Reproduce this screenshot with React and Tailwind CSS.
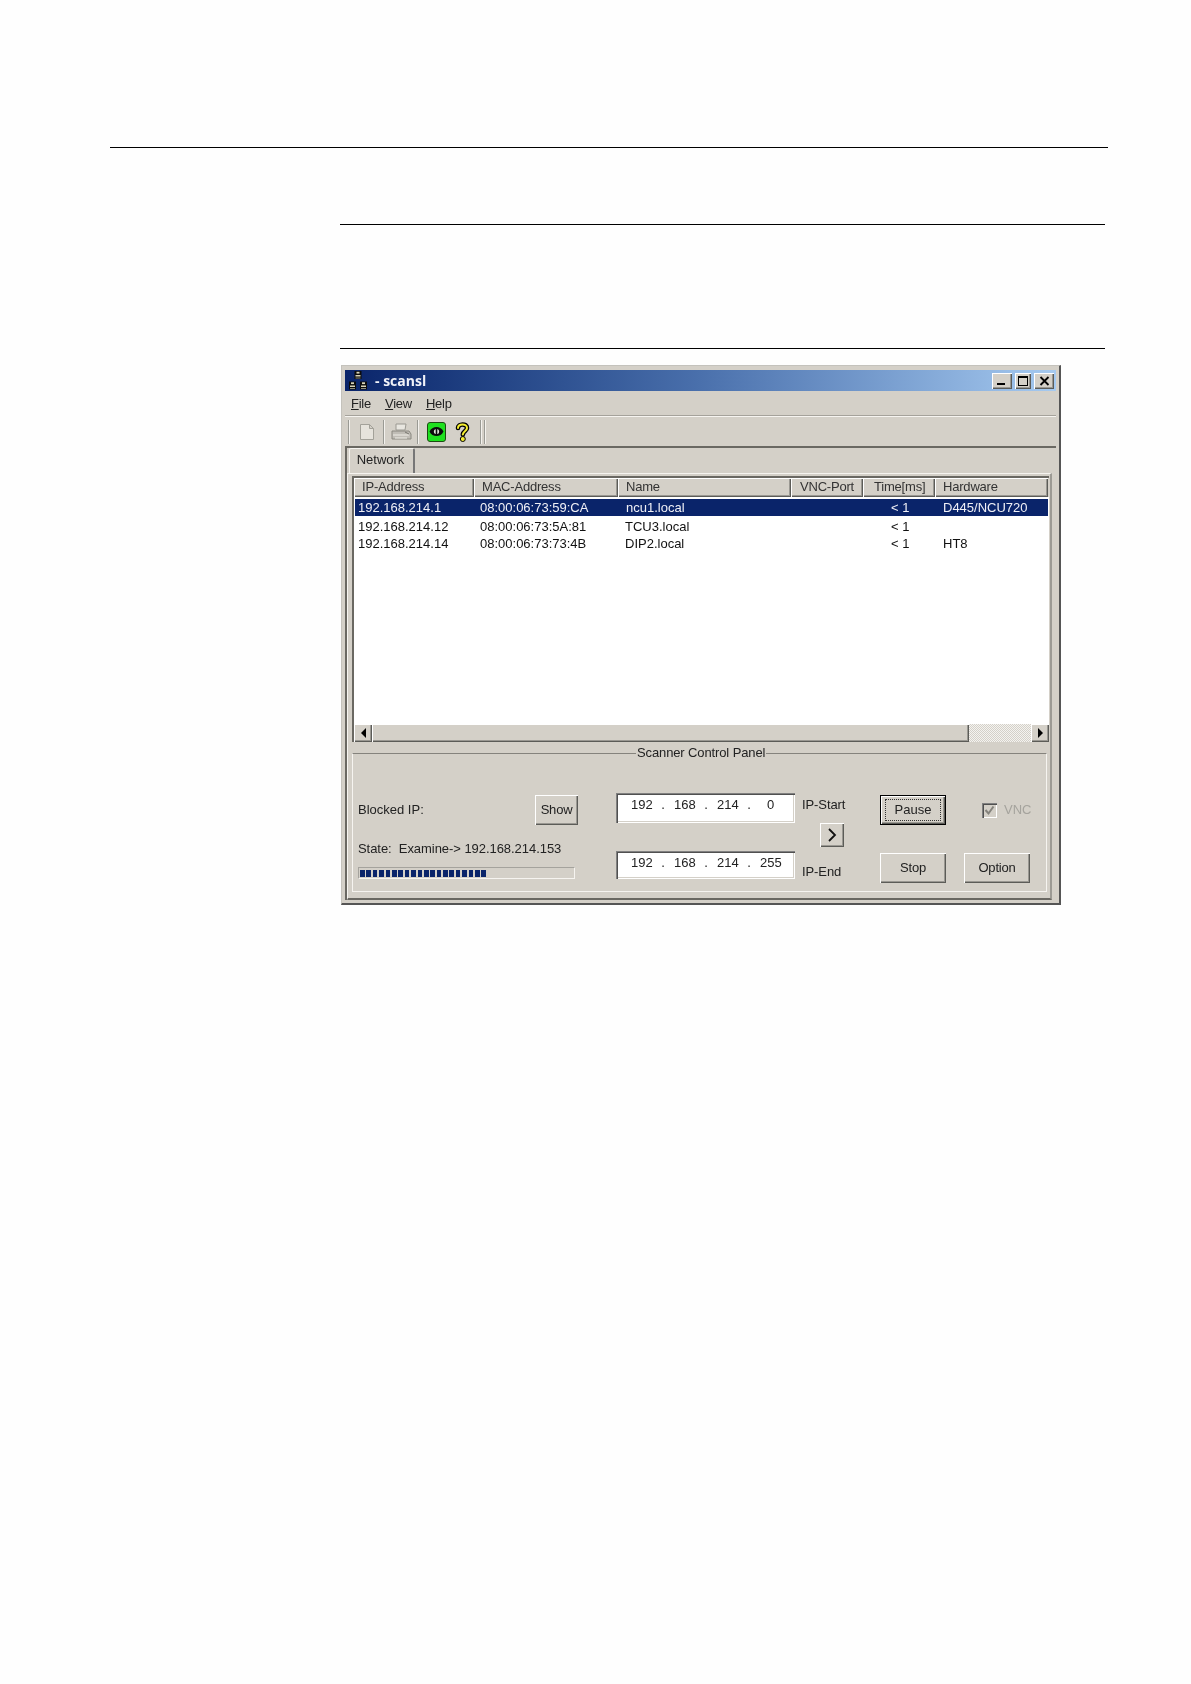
import React from "react";

const raised = "shadow-[inset_1px_1px_0_#ffffff,inset_-1px_-1px_0_#5c5c58,inset_-2px_-2px_0_#9a9892]";
const sunken = "shadow-[inset_1px_1px_0_#808080,inset_2px_2px_0_#505050,inset_-1px_-1px_0_#ffffff,inset_-2px_-2px_0_#d4d0c8]";

const columns = [
  { label: "IP-Address", w: "w-[120px]", pl: "pl-[8px]" },
  { label: "MAC-Address", w: "w-[144px]", pl: "pl-[8px]" },
  { label: "Name", w: "w-[173px]", pl: "pl-[8px]" },
  { label: "VNC-Port", w: "w-[72px]", pl: "pl-[9px]" },
  { label: "Time[ms]", w: "w-[72px]", pl: "pl-[11px]" },
  { label: "Hardware", w: "w-[113px]", pl: "pl-[8px]" },
];

const rows = [
  { ip: "192.168.214.1", mac: "08:00:06:73:59:CA", name: "ncu1.local", nameCls: "w-[266px] pl-[1px]", time: "< 1", hw: "D445/NCU720", cls: "bg-[#0a246a] text-[#f0f0f6] h-[17px] mt-[2px]" },
  { ip: "192.168.214.12", mac: "08:00:06:73:5A:81", name: "TCU3.local", nameCls: "w-[266px]", time: "< 1", hw: "", cls: "text-[#111] h-[17px] mt-[2px]" },
  { ip: "192.168.214.14", mac: "08:00:06:73:73:4B", name: "DIP2.local", nameCls: "w-[266px]", time: "< 1", hw: "HT8", cls: "text-[#111] h-[17px]" },
];

function Button({ children, className = "" }) {
  return (
    <div className={`flex items-center justify-center bg-[#d4d0c8] text-[13px] tracking-[-0.2px] text-[#222] ${raised} ${className}`}>{children}</div>
  );
}

function IpField({ values, className = "" }) {
  return (
    <div className={`flex w-[179px] bg-white text-[13px] leading-none text-[#222] ${sunken} ${className}`}>
      <div className="flex w-full items-start pl-[15px] pt-[5px]">
        {values.map((v, i) => (
          <React.Fragment key={i}>
            <span className="w-[21px] text-center">{v}</span>
            {i < 3 && <span className="w-[22px] text-center">.</span>}
          </React.Fragment>
        ))}
      </div>
    </div>
  );
}

function Separator({ className = "" }) {
  return <div className={`h-[24px] w-[2px] border-l border-[#9a9a94] bg-[#f4f2ee] ${className}`} />;
}

function WinIcon({ w, children }) {
  return (
    <div className={`flex h-[16px] items-center justify-center bg-[#d4d0c8] ${raised} ${w}`}>{children}</div>
  );
}

function NetBox({ x, y }) {
  return (
    <g transform={`translate(${x} ${y})`}>
      <rect x="0" y="0" width="7" height="8" fill="#0c0c0c" />
      <rect x="2" y="0.800" width="3" height="1.800" fill="#d8d4b8" />
      <rect x="1" y="4" width="5" height="1.500" fill="#d8d4b8" />
      <rect x="1" y="6.500" width="5" height="1" fill="#8c8a78" />
    </g>
  );
}

export default function App() {
  return (
    <div className="h-[1684px] w-[1191px] overflow-hidden bg-[#fefefe] font-['Liberation_Sans',sans-serif]">
      <div className="pt-[147px]">
        <div className="ml-[110px] h-[1px] w-[998px] bg-black" />
      </div>
      <div className="ml-[340px] mt-[76px] h-[1px] w-[765px] bg-black" />
      <div className="ml-[340px] mt-[123px] h-[1px] w-[765px] bg-black" />

      {/* Window */}
      <div className="ml-[341px] mt-[16px] flex h-[540px] w-[720px] flex-col border-b-[2px] border-l-[1px] border-r-[2px] border-t-[1px] border-b-[#555] border-l-[#c4c2bc] border-r-[#555] border-t-[#c4c2bc] bg-[#d4d0c8] p-[3px] pt-[4px] blur-[0.3px]">
        {/* Title bar */}
        <div className="flex h-[21px] shrink-0 items-center bg-gradient-to-r from-[#0a246a] via-[#4a70ac] to-[#a6caf0] pl-[3px] pr-[2px]">
          <svg width="20" height="21" viewBox="0 0 20 21" className="shrink-0">
            <NetBox x="6.500" y="1" />
            <NetBox x="1" y="11.500" />
            <NetBox x="12" y="11.500" />
          </svg>
          <span className="ml-[7px] font-['Open_Sans',sans-serif] text-[14px] font-bold leading-none text-[#f0f2f8]">- scansl</span>
          <div className="ml-auto flex gap-[3px]">
            <WinIcon w="w-[20px]"><div className="mr-[3px] mt-[7px] h-[2px] w-[8px] bg-black" /></WinIcon>
            <WinIcon w="w-[16px]"><div className="h-[10px] w-[10px] border border-t-[2px] border-black" /></WinIcon>
            <WinIcon w="w-[20px]">
              <svg width="11" height="10" viewBox="0 0 11 10"><path d="M1.500 1l8 8M9.500 1l-8 8" stroke="#000" strokeWidth="1.800" /></svg>
            </WinIcon>
          </div>
        </div>

        {/* Menu */}
        <div className="flex h-[25px] shrink-0 items-center gap-[14px] border-b border-[#a5a29b] pl-[6px] pt-[1px] text-[13px] tracking-[-0.25px] text-[#222]">
          <span><span className="underline">F</span>ile</span>
          <span><span className="underline">V</span>iew</span>
          <span><span className="underline">H</span>elp</span>
        </div>

        {/* Toolbar */}
        <div className="flex h-[30px] shrink-0 items-center border-t border-[#f6f4f0] pl-[3px]">
          <Separator />
          <svg width="17" height="18" viewBox="0 0 17 18" className="ml-[9px]">
            <path d="M1.500 1.500h9l4 4v11h-13z M10.500 1.500v4h4" fill="#e6e3dc" stroke="#a3a199" strokeWidth="1" />
          </svg>
          <Separator className="ml-[7px]" />
          <svg width="22" height="20" viewBox="0 0 22 20" className="ml-[5px]">
            <path d="M6 2h10l-1 6H6z" fill="#e8e6e0" stroke="#9b9992" />
            <path d="M2 9h17l2 3v5H2z" fill="#c0bdb6" stroke="#8a8880" />
            <path d="M3 13h16M5 16h12" stroke="#f0eee8" />
            <path d="M15 10l4 2" stroke="#77756e" />
          </svg>
          <Separator className="ml-[5px]" />
          <div className="ml-[8px] flex h-[20px] w-[19px] items-center justify-center rounded-[3px] border border-[#1c4a12] bg-[#1fe01f]">
            <svg width="15" height="13" viewBox="0 0 15 13">
              <path d="M0.500 6.500C3 0.500 12 0.500 14.500 6.500C12 12.500 3 12.500 0.500 6.500z" fill="#0c0c0c" />
              <circle cx="7.500" cy="6.500" r="2.600" fill="#dfe8dc" />
              <rect x="6.700" y="3.800" width="1.600" height="5.400" fill="#0c0c0c" />
            </svg>
          </div>
          <svg width="15" height="20" viewBox="0 0 15 20" className="ml-[9px]">
            <path d="M3 6C3 1.500 12 1 12 6C12 9 8.500 9 7.800 12.500" fill="none" stroke="#000" strokeWidth="4.600" strokeLinecap="round" />
            <path d="M3 6C3 1.500 12 1 12 6C12 9 8.500 9 7.800 12.500" fill="none" stroke="#f5ee30" strokeWidth="2" strokeLinecap="round" />
            <circle cx="7.800" cy="17" r="2.500" fill="#f5ee30" stroke="#000" />
          </svg>
          <Separator className="ml-[10px]" />
          <Separator className="ml-[2px]" />
        </div>

        {/* Client frame */}
        <div className="flex min-h-0 flex-1 flex-col border-l-[2px] border-t-[2px] border-[#6a6862] pr-[4px]">
          <div className="h-[25px] shrink-0 pl-[2px]">
            <div className="flex h-[26px] w-[66px] items-center justify-center rounded-t-[2px] border-l border-r-[2px] border-t border-l-[#f6f4f0] border-r-[#777] border-t-[#f6f4f0] bg-[#d4d0c8] pb-[4px] pr-[2px] text-[13px] text-[#222]">Network</div>
          </div>
          {/* Tab panel */}
          <div className="flex flex-1 flex-col border-b-[2px] border-l border-r-[2px] border-t border-b-[#6a6862] border-l-[#f6f4f0] border-r-[#9c9a94] border-t-[#f6f4f0] pb-[4px] pl-[4px] pr-[4px] pt-[2px]">
            {/* List */}
            <div className="flex h-[266px] w-[697px] flex-col border-l-[2px] border-t-[2px] border-[#6a6862] bg-white">
              <div className="flex h-[19px] shrink-0 bg-[#d4d0c8]">
                {columns.map((c) => (
                  <div key={c.label} className={`flex shrink-0 items-center pb-[1px] tracking-[-0.2px] ${c.w} ${c.pl} text-[13px] text-[#333] ${raised}`}>{c.label}</div>
                ))}
              </div>
              <div className="flex-1 pl-[1px] pr-[1px]">
                {rows.map((r) => (
                  <div key={r.ip} className={`flex items-center text-[13px] ${r.cls}`}>
                    <span className="w-[125px] pl-[3px]">{r.ip}</span>
                    <span className="w-[145px]">{r.mac}</span>
                    <span className={r.nameCls}>{r.name}</span>
                    <span className="w-[52px]">{r.time}</span>
                    <span>{r.hw}</span>
                  </div>
                ))}
              </div>
              {/* Scrollbar */}
              <div className="flex h-[18px] shrink-0 bg-[#d4d0c8]">
                <div className={`flex w-[18px] items-center justify-center ${raised}`}>
                  <div className="h-0 w-0 border-b-[5px] border-r-[5px] border-t-[5px] border-b-transparent border-r-black border-t-transparent" />
                </div>
                <div className={`w-[597px] ${raised}`} />
                <div className="flex-1 bg-[repeating-conic-gradient(#d4d0c8_0_25%,#f4f3f0_0_50%)] bg-[length:2px_2px]" />
                <div className={`flex w-[18px] items-center justify-center ${raised}`}>
                  <div className="h-0 w-0 border-b-[5px] border-l-[5px] border-t-[5px] border-b-transparent border-l-black border-t-transparent" />
                </div>
              </div>
            </div>

            {/* Group box */}
            <div className="relative mt-[11px] flex h-[139px] w-[695px] border-b border-l border-r border-t border-b-[#f6f4f0] border-l-[#f6f4f0] border-r-[#f6f4f0] border-t-[#85837d] pl-[5px] text-[13px] text-[#222]">
              <span className="absolute left-[283px] top-[-9px] bg-[#d4d0c8] px-[1px] text-[13px] leading-[16px] tracking-[-0.12px]">Scanner Control Panel</span>

              {/* Left */}
              <div className="flex w-[258px] shrink-0 flex-col pt-[41px]">
                <div className="flex w-[220px] items-center justify-between">
                  <span>Blocked IP:</span>
                  <Button className="h-[30px] w-[43px]">Show</Button>
                </div>
                <span className="mt-[16px] leading-[15px] tracking-[-0.05px]">State:&nbsp;&nbsp;Examine-&gt; 192.168.214.153</span>
                <div className="mt-[11px] flex h-[12px] w-[217px] items-center gap-[1.800px] border-b border-l border-r border-t border-b-[#f6f4f0] border-l-[#a5a39d] border-r-[#f6f4f0] border-t-[#a5a39d] pl-[1px]">
                  {Array.from({ length: 20 }, (_, i) => (
                    <div key={i} className="h-[7px] w-[4.600px] bg-[#0a246a]" />
                  ))}
                </div>
              </div>

              {/* IP fields */}
              <div className="flex w-[186px] shrink-0 flex-col pt-[39px]">
                <IpField values={["192", "168", "214", "0"]} className="h-[30px]" />
                <IpField values={["192", "168", "214", "255"]} className="mt-[28px] h-[28px]" />
              </div>

              {/* IP labels */}
              <div className="flex w-[78px] shrink-0 flex-col pt-[43px] tracking-[-0.1px]">
                <span className="leading-[16px]">IP-Start</span>
                <Button className="ml-[18px] mt-[10px] h-[24px] w-[24px]">
                  <svg width="12" height="16" viewBox="0 0 12 16"><path d="M3 2l6 6-6 6" fill="none" stroke="#111" strokeWidth="1.800" /></svg>
                </Button>
                <span className="mt-[17px] leading-[16px]">IP-End</span>
              </div>

              {/* Pause / Stop */}
              <div className="flex w-[84px] shrink-0 flex-col pt-[41px]">
                <div className={`flex h-[30px] w-[66px] items-center justify-center border border-black bg-[#d4d0c8] ${raised}`}>
                  <div className="flex h-[22px] w-[56px] items-center justify-center border border-dotted border-[#333]">Pause</div>
                </div>
                <Button className="mt-[28px] h-[30px] w-[66px]">Stop</Button>
              </div>

              {/* VNC / Option */}
              <div className="flex w-[66px] shrink-0 flex-col pt-[41px]">
                <div className="flex h-[30px] items-center pl-[18px] text-[#a5a39d]">
                  <div className={`flex h-[15px] w-[15px] shrink-0 items-center justify-center bg-[#d4d0c8] ${sunken}`}>
                    <svg width="11" height="11" viewBox="0 0 11 11"><path d="M1.500 5l3 3.500 5-7" fill="none" stroke="#85837d" strokeWidth="2" /></svg>
                  </div>
                  <span className="ml-[7px]">VNC</span>
                </div>
                <Button className="mt-[28px] h-[30px] w-[66px]">Option</Button>
              </div>
            </div>
          </div>
        </div>
      </div>
    </div>
  );
}
